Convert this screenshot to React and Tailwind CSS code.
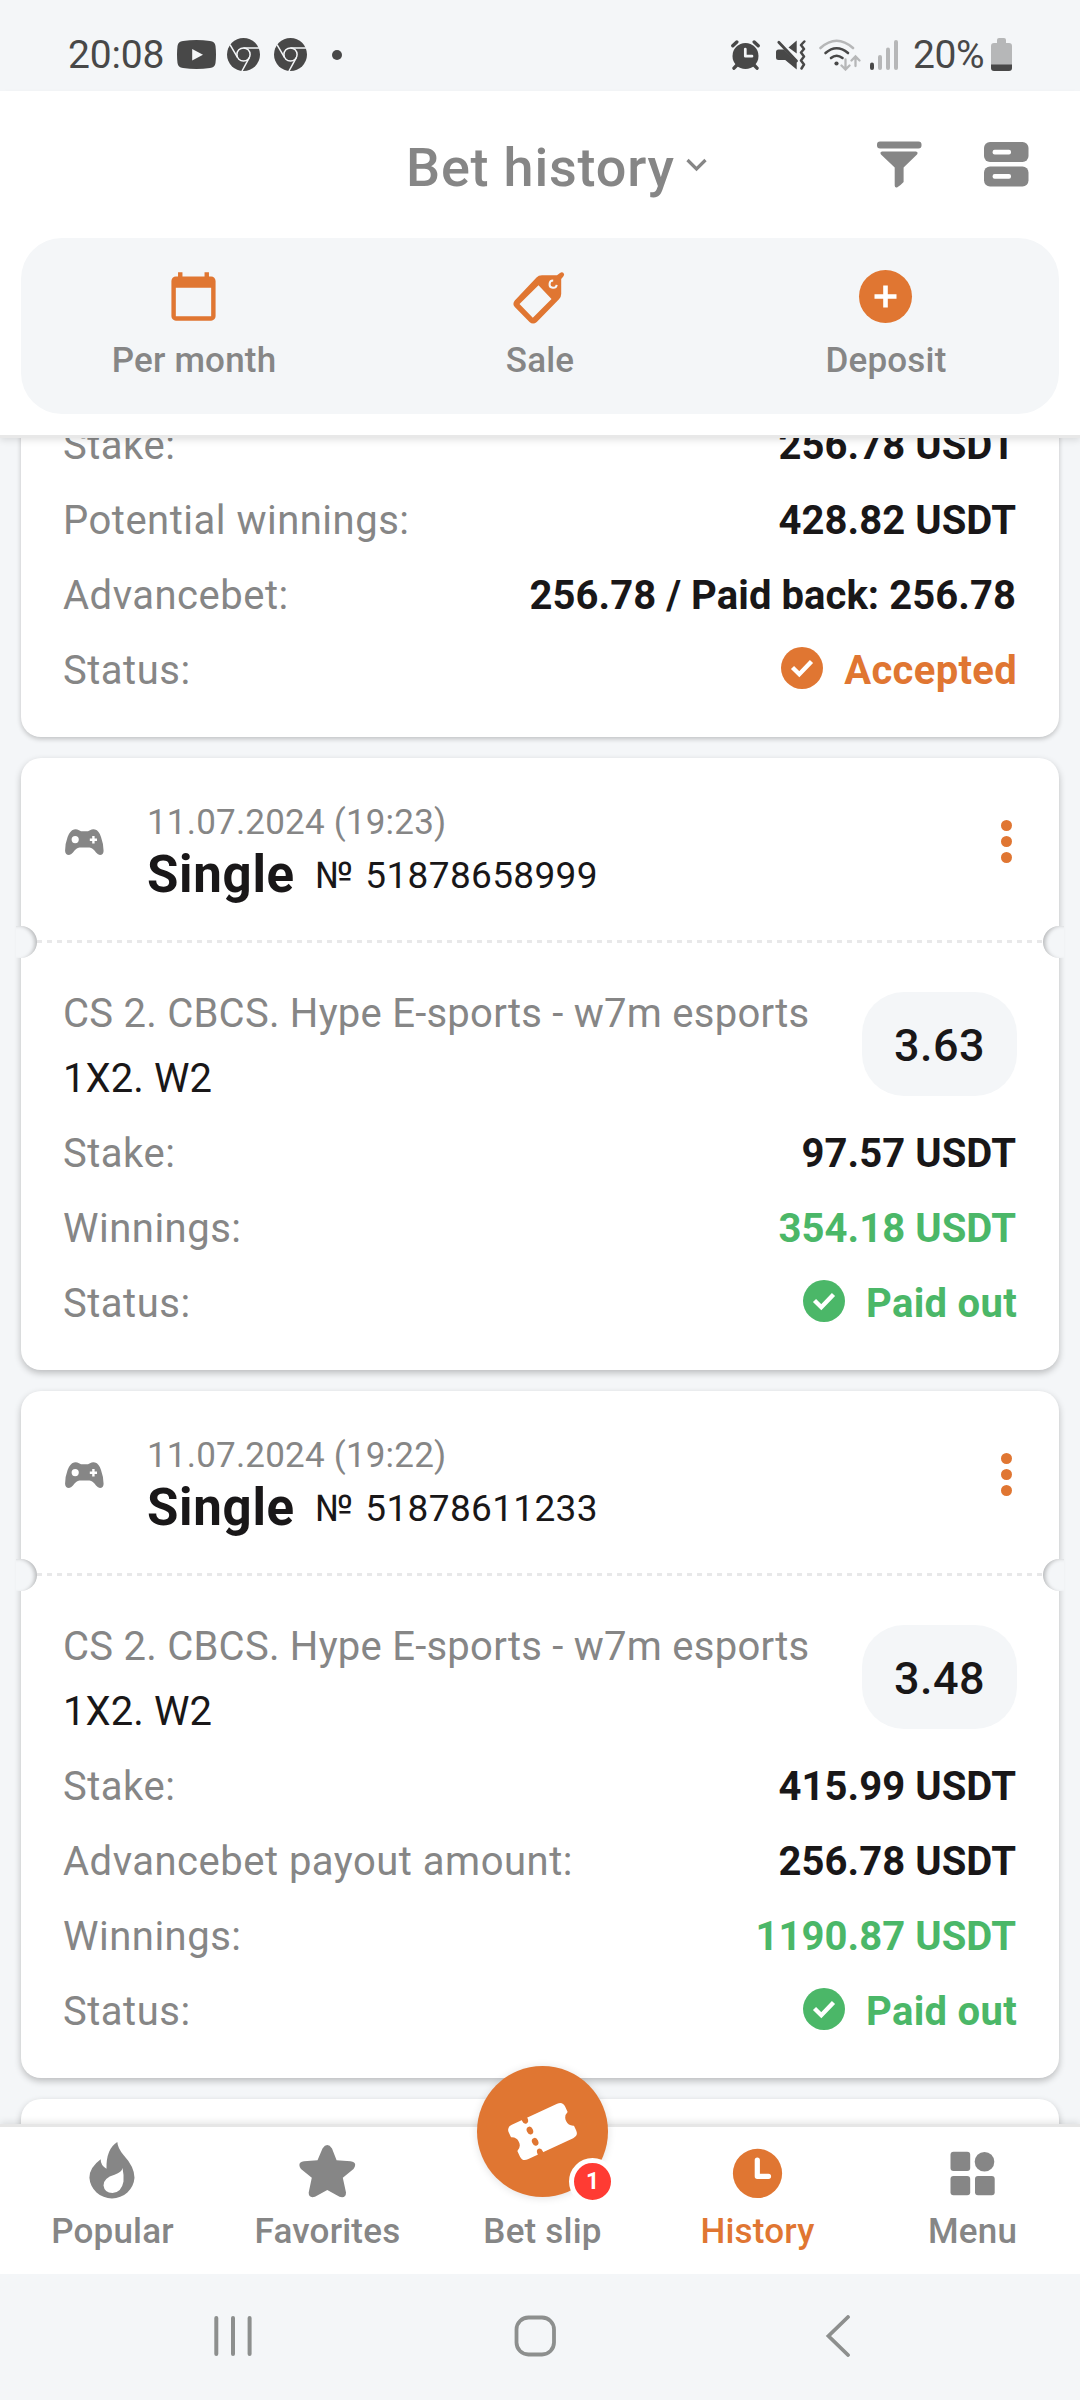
const ORANGE = "#e07632";
const GRAY = "#868686";
const INK = "#484848";
const FADED = "#b6b7b8";

function ChromeIcon() {
  return (
    <svg className="h-[33px] w-[33px]" viewBox="0 0 33 33">
      <circle cx="16.5" cy="16.5" r="16.5" fill={INK} />
      <g stroke="#f4f6f8" strokeWidth="1.5" fill="none">
        <circle cx="16.5" cy="16.5" r="6.6" />
        <path d="M16.5 9.9H32M10.6 19.6L3 6.6M22.3 19.6L15 33" />
      </g>
    </svg>
  );
}

function StatusBar() {
  return (
    <div className="flex h-[91px] shrink-0 items-center bg-[#f4f6f8] pt-[18px] pr-[68px] pl-[68px] text-[39px] leading-[40px] text-[#484848]">
      <span className="w-[109px] tracking-[-0.2px]">20:08</span>
      <svg className="h-[29px] w-[39px]" viewBox="0 0 39 29">
        <path d="M6 1Q19.500-1 33 1Q38 1.500 38.500 6Q39.500 14.500 38.500 23Q38 27.500 33 28Q19.500 30 6 28Q1 27.500.5 23Q-.5 14.500.5 6Q1 1.500 6 1Z" fill={INK} />
        <path d="M15.200 9V20.500L26 14.700Z" fill="#f4f6f8" />
      </svg>
      <div className="ml-[11px] flex gap-[14px]">
        <ChromeIcon />
        <ChromeIcon />
      </div>
      <span className="ml-[25px] h-[10px] w-[10px] rounded-full bg-[#484848]" />

      <div className="ml-auto flex items-center">
        <svg className="h-[30px] w-[29px]" viewBox="0 0 29 30">
          <circle cx="14.500" cy="16" r="13" fill={INK} />
          <path d="M1.800 5.800L5.800 2M27.200 5.800L23.200 2M6 25L3 28.200M23 25L26 28.200" stroke={INK} strokeWidth="3.400" strokeLinecap="round" />
          <path d="M14.300 9V16.200H21" stroke="#f4f6f8" strokeWidth="2.700" fill="none" strokeLinecap="round" strokeLinejoin="round" />
        </svg>
        <svg className="ml-[16px] h-[30px] w-[30px]" viewBox="0 0 30 30">
          <path d="M20.700.5V13.500L12.500 7.600ZM0 12Q0 9.500 2.500 9.500H8L20.700 22V29.500L9.200 20H2.500Q0 20 0 17.500Z" fill={INK} />
          <path d="M2.800 2.200L20.500 21" stroke={INK} strokeWidth="2.800" strokeLinecap="round" />
          <path d="M28.300 1.500L25 5L28 9L25 12.500L28 16.500L25 20.500L28 24.500L25.500 28.500" stroke={INK} strokeWidth="2.500" fill="none" strokeLinejoin="round" strokeLinecap="round" />
        </svg>
        <svg className="ml-[13px] h-[32px] w-[42px]" viewBox="0 0 42 32">
          <g fill="none" strokeLinecap="round" strokeWidth="2.600">
            <path d="M1.500 9Q17.500-5.500 34 9" stroke={FADED} />
            <path d="M6.500 14Q17.500 4.500 29 14M12 19Q17.500 14.500 23.500 19" stroke={INK} />
            <path d="M26.500 20.500V30M22.500 26.500L26.500 30.500L30.500 26.500M36.500 27V18M32.500 21.500L36.500 17.500L40.500 21.500" stroke={FADED} strokeWidth="2.300" />
          </g>
          <circle cx="17.500" cy="24.500" r="2.100" fill={INK} />
        </svg>
        <svg className="ml-[9px] h-[30px] w-[28px]" viewBox="0 0 28 30">
          <rect x="0" y="22.500" width="4" height="7.500" rx="2" fill={INK} />
          <rect x="8" y="15" width="4" height="15" rx="2" fill={FADED} />
          <rect x="16" y="7.500" width="4" height="22.500" rx="2" fill={FADED} />
          <rect x="24" y="0" width="4" height="30" rx="2" fill={FADED} />
        </svg>
        <span className="ml-[15px] w-[78px] tracking-[-0.4px]">20%</span>
        <svg className="h-[33px] w-[21px]" viewBox="0 0 21 33">
          <path d="M6 2Q6 0 8 0H13Q15 0 15 2V5H18Q21 5 21 8V27H0V8Q0 5 3 5H6Z" fill={FADED} />
          <path d="M0 26.500H21V30Q21 33 18 33H3Q0 33 0 30Z" fill={INK} />
        </svg>
      </div>
    </div>
  );
}

function Action({ label, children }) {
  return (
    <div className="flex flex-col items-center pt-[32px]">
      <svg className="mr-[1px] h-[53px] w-[53px] overflow-visible" viewBox="0 0 53 53">{children}</svg>
      <span className="mt-[18px] text-[35px] leading-[40px] font-medium tracking-[0.2px] text-[#868686]">{label}</span>
    </div>
  );
}

function Header() {
  return (
    <header className="relative z-10 h-[344px] shrink-0 bg-white shadow-[0_3px_0_#e8e8e8,0_5px_7px_rgba(0,0,0,0.12)]">
      <div className="flex h-[147px] items-center pr-[51px] pl-[406px]">
        <h1 className="pt-[7px] text-[54px] leading-[64px] font-medium tracking-[0.8px] text-[#868686]">Bet history</h1>
        <svg className="ml-[11px] h-[14px] w-[21px]" viewBox="0 0 21 14">
          <path d="M1.500 2L10.500 11L19.500 2" fill="none" stroke={GRAY} strokeWidth="3.200" />
        </svg>
        <svg className="ml-auto h-[47px] w-[45px]" viewBox="0 0 45 47">
          <rect y="0.500" width="44.500" height="7" rx="3" fill={GRAY} />
          <path d="M5 10.500H39Q41.500 11 40 13.500L26.600 26.500V41Q23 45 20 46.500Q17.700 47 17.700 44.500V26.500L4 13.500Q2.500 11 5 10.500Z" fill={GRAY} />
        </svg>
        <svg className="ml-[62px] h-[45px] w-[45px]" viewBox="0 0 45 45">
          <rect width="44.500" height="20" rx="6" fill={GRAY} />
          <rect y="24.500" width="44.500" height="20" rx="6" fill={GRAY} />
          <rect x="8.600" y="7.700" width="18.400" height="4.800" rx="2" fill="#fff" />
          <rect x="8.600" y="32" width="18.400" height="4.800" rx="2" fill="#fff" />
        </svg>
      </div>
      <div className="mx-[21px] grid h-[176px] grid-cols-3 rounded-[41px] bg-[#f4f6f8]">
        <Action label="Per month">
          <path transform="scale(2.208)" fill={ORANGE} d="M20 3h-1V1h-2v2H7V1H5v2H4c-1.100 0-2 .9-2 2v16c0 1.100.9 2 2 2h16c1.100 0 2-.9 2-2V5c0-1.100-.9-2-2-2zm0 18H4V8h16v13z" />
        </Action>
        <Action label="Sale">
          <path fillRule="evenodd" fill={ORANGE} d="M1.800 30.500L23.500 7.500Q25.500 5.300 29 5.300H44L47 3Q49 1.500 50.500 3Q52 4.800 50.300 6.600L48.200 9V24Q48.200 27 46 29.200L23.800 52Q20 55 16.500 52L1.800 37Q-1 34 1.800 30.500ZM6.500 34L19.800 47.700L38.500 29L25.500 15.300Z" />
          <path d="M40.200 10.600A3.600 3.600 0 1 0 43.700 14.800" fill="none" stroke="#f4f6f8" strokeWidth="2" />
        </Action>
        <Action label="Deposit">
          <circle cx="26.500" cy="26.500" r="26.500" fill={ORANGE} />
          <path d="M26.500 15.500V37.500M15.500 26.500H37.500" stroke="#fff" strokeWidth="4.600" />
        </Action>
      </div>
    </header>
  );
}

function CheckBadge() {
  return (
    <svg className="mb-[5px] h-[42px] w-[42px]" viewBox="0 0 42 42">
      <circle cx="21" cy="21" r="21" fill="currentColor" />
      <path d="M11.500 20.500L18.300 27.200L30.500 14.500" fill="none" stroke="#fff" strokeWidth="4.400" />
    </svg>
  );
}

const tones = {
  dark: "text-[#191718]",
  green: "text-[#4bb768]",
  orange: "text-[#e07632]",
};

function Row({ label, value, tone = "dark", check }) {
  return (
    <div className="flex h-[75px] items-center justify-between px-[42px] text-[40px] leading-[48px]">
      <span className="tracking-[0.5px] text-[#868686]">{label}</span>
      {check ? (
        <span className={`flex items-center gap-[21px] font-bold tracking-[0.3px] ${tones[tone]}`}>
          <CheckBadge />
          {value}
        </span>
      ) : (
        <span className={`pr-[1px] font-bold tracking-[0.07px] ${tones[tone]}`}>{value}</span>
      )}
    </div>
  );
}

function Gamepad() {
  return (
    <svg className="h-[26px] w-[39px]" viewBox="0 0 39 26">
      <path fillRule="evenodd" fill={GRAY} d="M9 0.500Q11.500-.3 14 1.300L16 2.300H23L25 1.300Q27.500-.3 30 .5Q34 1.500 36 8Q38.600 15 38.600 22Q38.300 26 35 26Q33 25.800 31 23.500Q28 19.300 24.500 18.600H14.500Q11 19.300 8 23.500Q6 25.800 4 26Q.4 26 .1 22Q0 15 2.600 8Q5 1.500 9 .5ZM10.200 7A3.600 3.600 0 1 0 10.200 14.200A3.600 3.600 0 1 0 10.200 7ZM27.200 7V9.500H24.800V12H27.200V14.400H29.600V12H32V9.500H29.600V7Z" />
    </svg>
  );
}

function BetCard({ time, number, odds, rows }) {
  return (
    <article className="rounded-[20px] bg-white pb-[29px] shadow-[0_3px_7px_rgba(0,0,0,0.24)]">
      <div className="flex h-[182px] pr-[47px] pl-[44px]">
        <div className="w-[82px] pt-[71px]">
          <Gamepad />
        </div>
        <div className="pt-[45px]">
          <div className="h-[42px] text-[35px] leading-[40px] tracking-[0.2px] text-[#868686]">{time}</div>
          <div className="flex items-center text-[#191718]">
            <span className="text-[51px] leading-[60px] font-bold tracking-[0.7px]">Single</span>
            <span className="mt-[2px] ml-[20px] text-[37px] leading-[44px] tracking-[0.35px] [word-spacing:2.500px]">№ {number}</span>
          </div>
        </div>
        <div className="ml-auto flex flex-col gap-[5px] pt-[62px]">
          <span className="h-[11px] w-[11px] rounded-full bg-[#e07632]" />
          <span className="h-[11px] w-[11px] rounded-full bg-[#e07632]" />
          <span className="h-[11px] w-[11px] rounded-full bg-[#e07632]" />
        </div>
      </div>
      <div className="relative h-[3px] px-[16px]">
        <div className="h-[3px] bg-[repeating-linear-gradient(90deg,#e8e8e9_0_5px,transparent_5px_10px)]" />
        <span className="absolute top-[-14px] left-[-5px] h-[32px] w-[21px] rounded-r-[16px] bg-[#f4f6f8] shadow-[inset_-4px_1px_4px_-2px_rgba(0,0,0,0.26)]" />
        <span className="absolute top-[-14px] right-[-5px] h-[32px] w-[21px] rounded-l-[16px] bg-[#f4f6f8] shadow-[inset_4px_1px_4px_-2px_rgba(0,0,0,0.26)]" />
      </div>
      <div className="flex h-[173px] justify-between px-[42px]">
        <div className="pt-[38px] text-[40px] leading-[65px]">
          <div className="tracking-[0.25px] text-[#868686]">CS 2. CBCS. Hype E-sports - w7m esports</div>
          <div className="tracking-[0.1px] text-[#191718]">1X2. W2</div>
        </div>
        <div className="mt-[49px] flex h-[104px] w-[155px] items-center justify-center rounded-[42px] bg-[#f4f6f8] pt-[3px] text-[45px] leading-[52px] font-medium tracking-[0.5px] text-[#191718]">
          {odds}
        </div>
      </div>
      {rows.map((row) => (
        <Row key={row.label} {...row} />
      ))}
    </article>
  );
}

function NavItem({ label, active, children }) {
  return (
    <div className={`flex flex-col items-center pt-[15px] ${active ? "text-[#e07632]" : "text-[#868686]"}`}>
      <div className="h-[63px]">{children}</div>
      <span className="mt-[7px] text-[35px] leading-[40px] font-medium tracking-[0.2px]">{label}</span>
    </div>
  );
}

function NavIcon({ children }) {
  return (
    <svg className="h-[63px] w-[63px]" viewBox="0 0 63 63" fill="currentColor">
      {children}
    </svg>
  );
}

function BetSlipButton() {
  return (
    <div className="absolute top-[-61px] left-[477px] h-[131px] w-[131px] rounded-full bg-[#e07632] shadow-[0_1px_8px_rgba(0,0,0,0.12)]">
      <svg className="h-[131px] w-[131px]" viewBox="0 0 131 131">
        <g transform="translate(65.500 65.500) rotate(-25)">
          <path fill="#fff" d="M-25-19H25Q31-19 31-13V-7A8 8 0 0 0 31 8V13Q31 19 25 19H-25Q-31 19-31 13V7A8 8 0 0 0-31-8V-13Q-31-19-25-19Z" />
          <g fill={ORANGE}>
            <ellipse cx="-11" cy="-18.500" rx="3" ry="4.500" />
            <ellipse cx="-11" cy="-6.200" rx="3.100" ry="4" />
            <ellipse cx="-11" cy="6.200" rx="3.100" ry="4" />
            <ellipse cx="-11" cy="18.500" rx="3" ry="4.500" />
          </g>
        </g>
      </svg>
      <span className="absolute top-[92px] left-[92px] flex h-[47px] w-[47px] items-center justify-center rounded-full border-[5px] border-white bg-[#ff3b33] text-[23px] leading-[24px] font-bold text-white">
        1
      </span>
    </div>
  );
}

function BottomNav() {
  return (
    <nav className="relative z-10 grid h-[147px] shrink-0 grid-cols-5 bg-white pl-[5px] shadow-[0_-3px_0_#e6e6e6,0_-5px_7px_rgba(0,0,0,0.10)]">
      <NavItem label="Popular">
        <NavIcon>
          <path fillRule="evenodd" d="M36.300 0Q36.700 6 42.500 13Q53.500 25 53.500 35.700A22.600 22.200 0 0 1 8.400 35.700Q8.500 25.500 19.700 17.300Q19.500 23.500 25.500 26.700Q25 7 36.300 0ZM41.500 26Q41 30 33.500 32.800Q22.500 36 22.500 43.500Q23.500 51 31.500 51Q40.500 50.500 42.500 39.500Q43 33 41.500 26Z" />
        </NavIcon>
      </NavItem>
      <NavItem label="Favorites">
        <NavIcon>
          <path d="M26.500 6.500Q31.300-.3 36 6.500L40.600 18.300L54.500 19.200Q62 20.500 57.500 27L46.800 35.700L50 50.500Q50 56.500 43.500 54.800L31.300 48L19 54.800Q12.500 56.500 12.700 50.500L15.800 35.700L5 27Q.6 20.500 8 19.200L21.500 18.300Z" />
        </NavIcon>
      </NavItem>
      <NavItem label="Bet slip" />
      <NavItem label="History" active>
        <NavIcon>
          <circle cx="31.500" cy="31.400" r="24.600" />
          <path d="M31.300 18V34.300H42.500" fill="none" stroke="#fff" strokeWidth="5.200" strokeLinecap="round" strokeLinejoin="round" />
        </NavIcon>
      </NavItem>
      <NavItem label="Menu">
        <NavIcon>
          <rect x="9.500" y="9.700" width="19.700" height="19.300" rx="3" />
          <rect x="9.500" y="34" width="19.700" height="19.300" rx="3" />
          <rect x="34" y="34" width="19.700" height="19.300" rx="3" />
          <circle cx="43.500" cy="19.700" r="9.800" />
        </NavIcon>
      </NavItem>
      <BetSlipButton />
    </nav>
  );
}

function SystemNav() {
  return (
    <div className="relative z-10 flex h-[126px] shrink-0 items-center bg-[#f4f6f8] pb-[2px] pl-[212px]">
      <svg className="h-[42px] w-[42px]" viewBox="0 0 42 42" stroke="#8d8f8e" strokeWidth="4" strokeLinecap="round">
        <path d="M4.300 3V39M21 3V39M37.600 3V39" />
      </svg>
      <svg className="ml-[260px] h-[42px] w-[42px]" viewBox="0 0 42 42" fill="none" stroke="#8d8f8e" strokeWidth="3.800">
        <rect x="2.500" y="2.500" width="37.500" height="37" rx="12" />
      </svg>
      <svg className="ml-[262px] h-[42px] w-[42px]" viewBox="0 0 42 42" fill="none" stroke="#8d8f8e" strokeWidth="3.800" strokeLinecap="round">
        <path d="M30 2L10.500 21L30 40" />
      </svg>
    </div>
  );
}

export default function App() {
  return (
    <div className="flex h-[2400px] w-[1080px] flex-col overflow-hidden bg-[#f4f6f8] font-['Roboto',sans-serif]">
      <StatusBar />
      <Header />
      <main className="flex h-[1692px] shrink-0 flex-col gap-[21px] overflow-hidden px-[21px]">
        <article className="-mt-[27px] rounded-b-[20px] bg-white pb-[29px] shadow-[0_2px_5px_rgba(0,0,0,0.22)]">
          <Row label="Stake:" value="256.78 USDT" />
          <Row label="Potential winnings:" value="428.82 USDT" />
          <Row label="Advancebet:" value="256.78 / Paid back: 256.78" />
          <Row label="Status:" value="Accepted" tone="orange" check />
        </article>
        <BetCard
          time="11.07.2024 (19:23)"
          number="51878658999"
          odds="3.63"
          rows={[
            { label: "Stake:", value: "97.57 USDT" },
            { label: "Winnings:", value: "354.18 USDT", tone: "green" },
            { label: "Status:", value: "Paid out", tone: "green", check: true },
          ]}
        />
        <BetCard
          time="11.07.2024 (19:22)"
          number="51878611233"
          odds="3.48"
          rows={[
            { label: "Stake:", value: "415.99 USDT" },
            { label: "Advancebet payout amount:", value: "256.78 USDT" },
            { label: "Winnings:", value: "1190.87 USDT", tone: "green" },
            { label: "Status:", value: "Paid out", tone: "green", check: true },
          ]}
        />
        <div className="h-[60px] shrink-0 rounded-t-[20px] bg-white shadow-[0_3px_7px_rgba(0,0,0,0.24)]" />
      </main>
      <BottomNav />
      <SystemNav />
    </div>
  );
}
